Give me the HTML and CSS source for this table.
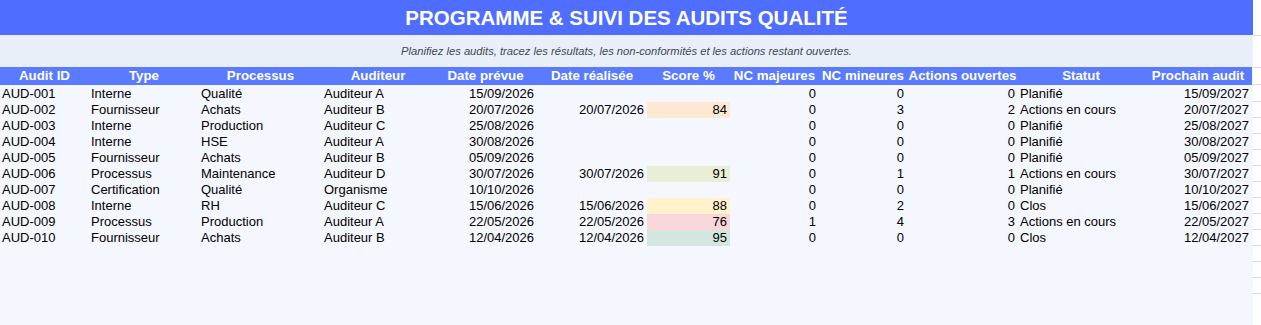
FILE: index.html
```html
<!DOCTYPE html>
<html lang="fr">
<head>
<meta charset="utf-8">
<title>Programme &amp; suivi des audits qualité</title>
<link rel="stylesheet" href="styles.css">
</head>
<body>
<div class="page">
  <div class="sheet">
    <div class="title">PROGRAMME &amp; SUIVI DES AUDITS QUALITÉ</div>
    <div class="subtitle">Planifiez les audits, tracez les résultats, les non-conformités et les actions restant ouvertes.</div>
    <table class="grid">
      <colgroup>
        <col class="c-a"><col class="c-b"><col class="c-c"><col class="c-d"><col class="c-e"><col class="c-f">
        <col class="c-g"><col class="c-h"><col class="c-i"><col class="c-j"><col class="c-k"><col class="c-l">
      </colgroup>
      <thead>
        <tr>
          <th>Audit ID</th><th>Type</th><th>Processus</th><th>Auditeur</th><th>Date prévue</th><th>Date réalisée</th>
          <th>Score %</th><th>NC majeures</th><th>NC mineures</th><th>Actions ouvertes</th><th>Statut</th><th>Prochain audit</th>
        </tr>
      </thead>
      <tbody>
        <tr><td>AUD-001</td><td>Interne</td><td>Qualité</td><td>Auditeur A</td><td class="r">15/09/2026</td><td class="r"></td><td class="r"></td><td class="r">0</td><td class="r">0</td><td class="r">0</td><td>Planifié</td><td class="r">15/09/2027</td></tr>
        <tr><td>AUD-002</td><td>Fournisseur</td><td>Achats</td><td>Auditeur B</td><td class="r">20/07/2026</td><td class="r">20/07/2026</td><td class="r s-peach">84</td><td class="r">0</td><td class="r">3</td><td class="r">2</td><td>Actions en cours</td><td class="r">20/07/2027</td></tr>
        <tr><td>AUD-003</td><td>Interne</td><td>Production</td><td>Auditeur C</td><td class="r">25/08/2026</td><td class="r"></td><td class="r"></td><td class="r">0</td><td class="r">0</td><td class="r">0</td><td>Planifié</td><td class="r">25/08/2027</td></tr>
        <tr><td>AUD-004</td><td>Interne</td><td>HSE</td><td>Auditeur A</td><td class="r">30/08/2026</td><td class="r"></td><td class="r"></td><td class="r">0</td><td class="r">0</td><td class="r">0</td><td>Planifié</td><td class="r">30/08/2027</td></tr>
        <tr><td>AUD-005</td><td>Fournisseur</td><td>Achats</td><td>Auditeur B</td><td class="r">05/09/2026</td><td class="r"></td><td class="r"></td><td class="r">0</td><td class="r">0</td><td class="r">0</td><td>Planifié</td><td class="r">05/09/2027</td></tr>
        <tr><td>AUD-006</td><td>Processus</td><td>Maintenance</td><td>Auditeur D</td><td class="r">30/07/2026</td><td class="r">30/07/2026</td><td class="r s-olive">91</td><td class="r">0</td><td class="r">1</td><td class="r">1</td><td>Actions en cours</td><td class="r">30/07/2027</td></tr>
        <tr><td>AUD-007</td><td>Certification</td><td>Qualité</td><td>Organisme</td><td class="r">10/10/2026</td><td class="r"></td><td class="r"></td><td class="r">0</td><td class="r">0</td><td class="r">0</td><td>Planifié</td><td class="r">10/10/2027</td></tr>
        <tr><td>AUD-008</td><td>Interne</td><td>RH</td><td>Auditeur C</td><td class="r">15/06/2026</td><td class="r">15/06/2026</td><td class="r s-yellow">88</td><td class="r">0</td><td class="r">2</td><td class="r">0</td><td>Clos</td><td class="r">15/06/2027</td></tr>
        <tr><td>AUD-009</td><td>Processus</td><td>Production</td><td>Auditeur A</td><td class="r">22/05/2026</td><td class="r">22/05/2026</td><td class="r s-pink">76</td><td class="r">1</td><td class="r">4</td><td class="r">3</td><td>Actions en cours</td><td class="r">22/05/2027</td></tr>
        <tr><td>AUD-010</td><td>Fournisseur</td><td>Achats</td><td>Auditeur B</td><td class="r">12/04/2026</td><td class="r">12/04/2026</td><td class="r s-mint">95</td><td class="r">0</td><td class="r">0</td><td class="r">0</td><td>Clos</td><td class="r">12/04/2027</td></tr>
      </tbody>
    </table>
  </div>
  <div class="gutter">
    <div class="g g-title"></div>
    <div class="g g-sub"></div>
    <div class="g g-head"></div>
    <div class="g g-first"></div>
    <div class="g"></div><div class="g"></div><div class="g"></div><div class="g"></div>
    <div class="g"></div><div class="g"></div><div class="g"></div><div class="g"></div>
    <div class="g"></div><div class="g"></div><div class="g"></div><div class="g"></div>
  </div>
</div>
</body>
</html>
```

FILE: styles.css
```css
* { box-sizing: border-box; }

html, body {
  margin: 0;
  padding: 0;
  background: #ffffff;
  font-family: "Liberation Sans", Arial, sans-serif;
}

.page {
  display: flex;
  width: 1261px;
  height: 325px;
  overflow: hidden;
}

.sheet {
  width: 1253px;
  height: 325px;
  flex: none;
  background: #f4f7fe;
  display: flex;
  flex-direction: column;
}

.title {
  height: 35px;
  background: #4f6dff;
  color: #ffffff;
  font-weight: bold;
  font-size: 20.5px;
  display: flex;
  align-items: center;
  justify-content: center;
}

.subtitle {
  height: 32px;
  background: #e8eff8;
  color: #404855;
  font-style: italic;
  font-size: 11.2px;
  display: flex;
  align-items: center;
  justify-content: center;
}

.grid {
  width: 1252px;
  table-layout: fixed;
  border-collapse: collapse;
  border-spacing: 0;
}

.c-a { width: 89px; }
.c-b { width: 110px; }
.c-c { width: 123px; }
.c-d { width: 112px; }
.c-e { width: 103px; }
.c-f { width: 110px; }
.c-g { width: 83px; }
.c-h { width: 89px; }
.c-i { width: 88px; }
.c-j { width: 111px; }
.c-k { width: 126px; }
.c-l { width: 108px; }

.grid th {
  height: 18px;
  padding: 0;
  background: #5a7bff;
  border-bottom: 1px solid #f4f7fe;
  color: #ffffff;
  font-weight: bold;
  font-size: 13.3px;
  line-height: 17px;
  text-align: center;
  white-space: nowrap;
  overflow: visible;
}

.grid td {
  height: 16px;
  padding: 0 3px 0 2px;
  font-size: 13px;
  line-height: 16px;
  color: #000000;
  text-align: left;
  white-space: nowrap;
  overflow: hidden;
}

.grid td.r { text-align: right; }

.s-peach { background: #fde8d3; }
.s-olive { background: #e9eed6; }
.s-yellow { background: #fff2cc; }
.s-pink { background: #f8d6da; }
.s-mint { background: #d4e7df; }

.gutter {
  flex: 1;
  display: flex;
  flex-direction: column;
  background: #ffffff;
}

.g {
  flex: none;
  height: 16px;
  border-bottom: 1px solid #d9d9d9;
}

.g-title { height: 36px; }
.g-sub { height: 32px; }
.g-head { height: 17px; }
.g-first { height: 17px; }
```
